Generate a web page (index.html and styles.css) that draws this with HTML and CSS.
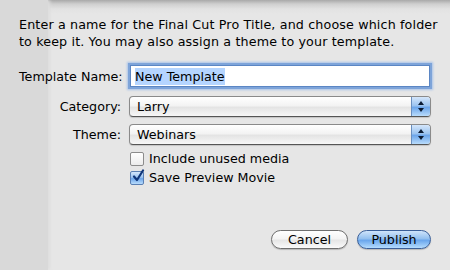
FILE: index.html
```html
<!DOCTYPE html>
<html>
<head>
<link rel="stylesheet" href="styles.css">
</head>
<body>
  <div class="sheet">
    <div class="side"></div>
    <div class="main">
      <p class="intro">Enter a name for the Final Cut Pro Title, and choose which folder<br>to keep it. You may also assign a theme to your template.</p>
      <div class="form">
        <div class="row">
          <label class="lbl">Template Name:</label>
          <div class="field focus"><span class="sel">New Template</span></div>
        </div>
        <div class="row">
          <label class="lbl">Category:</label>
          <div class="popup"><span class="val">Larry</span><span class="arrows"><i class="up"></i><i class="down"></i></span></div>
        </div>
        <div class="row">
          <label class="lbl">Theme:</label>
          <div class="popup"><span class="val">Webinars</span><span class="arrows"><i class="up"></i><i class="down"></i></span></div>
        </div>
        <div class="check first">
          <span class="box"></span><span>Include unused media</span>
        </div>
        <div class="check">
          <span class="box on"><svg width="14" height="14" viewBox="0 0 14 14"><path d="M3 7.5 L6 11 L12 1.5" fill="none" stroke="#10367a" stroke-width="2.2" stroke-linecap="round" stroke-linejoin="round"/></svg></span><span>Save Preview Movie</span>
        </div>
      </div>
      <div class="buttons">
        <button class="btn">Cancel</button>
        <button class="btn default">Publish</button>
      </div>
    </div>
  </div>
</body>
</html>
```
FILE: styles.css
```css
html, body {
  margin: 0;
  padding: 0;
}
body {
  width: 450px;
  height: 270px;
  overflow: hidden;
  background: #e6e6e6;
  font-family: "DejaVu Sans", sans-serif;
  font-size: 12.7px;
  color: #000;
}
.sheet {
  display: flex;
  height: 270px;
  background: linear-gradient(to bottom, #a9a9a9 0px, #cfcfcf 4px, #e2e2e2 9px, #e6e6e6 14px);
}
.side {
  width: 48px;
  flex: none;
  background: #d9d9d9;
  box-shadow: 2px 0 3px #dedede;
}
.main {
  flex: 1;
  min-width: 0;
  margin-left: -29px;
  padding-right: 19px;
  display: flex;
  flex-direction: column;
}
.intro {
  margin: 16px 0 0 0;
  line-height: 17px;
  letter-spacing: 0.14px;
  white-space: nowrap;
}
.form {
  margin-top: 13px;
  display: flex;
  flex-direction: column;
}
.row {
  display: flex;
  align-items: center;
  margin-bottom: 7px;
}
.lbl {
  width: 102px;
  text-align: right;
  margin-right: 8px;
  white-space: nowrap;
}
.field {
  flex: 1;
  height: 20px;
  background: #fff;
  border: 1px solid #7d7d7d;
  display: flex;
  align-items: center;
  padding-left: 4px;
}
.focus {
  box-shadow: 0 0 0 2px #7ea4d9, 0 0 2px 3px #a9c4ea;
  border-color: #5b86c4;
  margin: 2px 1px;
}
.sel {
  background: #b5d5ff;
  padding: 1px 0;
}
.popup {
  flex: 1;
  height: 19px;
  border: 1px solid #8a8a8a;
  border-bottom-color: #555;
  border-radius: 4px;
  background: linear-gradient(to bottom, #ffffff 0%, #f3f3f3 45%, #e4e4e4 55%, #f7f7f7 100%);
  display: flex;
  align-items: center;
  justify-content: space-between;
  overflow: hidden;
  box-shadow: 0 1px 1px rgba(0,0,0,0.15);
}
.val {
  padding-left: 7px;
}
.arrows {
  width: 18px;
  height: 19px;
  background: linear-gradient(to bottom, #d4e6fb 0%, #9cc4f0 45%, #6da6ea 55%, #b9dcfc 100%);
  border-left: 1px solid #6a8fbf;
  display: flex;
  flex-direction: column;
  align-items: center;
  justify-content: center;
  gap: 3px;
}
.arrows i {
  width: 0;
  height: 0;
  border-left: 3px solid transparent;
  border-right: 3px solid transparent;
}
.up {
  border-bottom: 4px solid #0b1b33;
}
.down {
  border-top: 4px solid #0b1b33;
}
.check {
  display: flex;
  align-items: center;
  margin-left: 111px;
  height: 19px;
}
.check.first {
  margin-top: -3px;
}
.box {
  width: 12px;
  height: 12px;
  border: 1px solid #8c8c8c;
  border-radius: 2px;
  background: linear-gradient(to bottom, #ffffff, #ececec);
  margin-right: 5px;
  position: relative;
}
.box.on {
  background: linear-gradient(to bottom, #d4e6fb 0%, #9cc4f0 45%, #6da6ea 55%, #b9dcfc 100%);
  border-color: #5a7fb3;
}
.box svg {
  position: absolute;
  left: 0;
  top: -3px;
}
.buttons {
  display: flex;
  justify-content: flex-end;
  gap: 9px;
  margin-top: 43px;
}
.btn {
  font-family: "DejaVu Sans", sans-serif;
  font-size: 12.7px;
  height: 19px;
  border-radius: 10px;
  border: 1px solid #6f6f6f;
  background: linear-gradient(to bottom, #ffffff 0%, #f4f4f4 45%, #e6e6e6 55%, #fafafa 100%);
  box-shadow: 0 1px 1px rgba(0,0,0,0.2);
  padding: 0;
  width: 77px;
  color: #000;
}
.btn.default {
  width: 74px;
  border-color: #3a5f99;
  background: linear-gradient(to bottom, #cfe4fb 0%, #93c0ef 45%, #6aa6ec 55%, #b4dcfe 100%);
}
```
